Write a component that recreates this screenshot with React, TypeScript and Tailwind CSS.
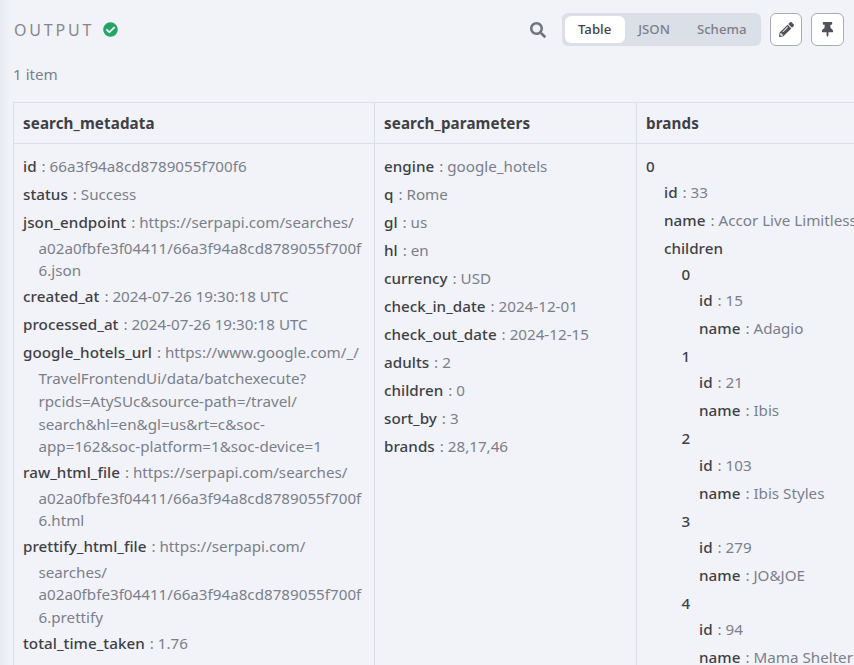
import { FaCheckCircle, FaPencilAlt, FaSearch, FaThumbtack } from "react-icons/fa";
import type { ReactNode } from "react";

type Row = { k: string; v?: ReactNode; lines?: string[] };

const META: Row[] = [
	{ k: "id", v: "66a3f94a8cd8789055f700f6" },
	{ k: "status", v: "Success" },
	{ k: "json_endpoint", v: "https://serpapi.com/searches/", lines: ["a02a0fbfe3f04411/66a3f94a8cd8789055f700f", "6.json"] },
	{ k: "created_at", v: "2024-07-26 19:30:18 UTC" },
	{ k: "processed_at", v: "2024-07-26 19:30:18 UTC" },
	{
		k: "google_hotels_url",
		v: "https://www.google.com/_/",
		lines: ["TravelFrontendUi/data/batchexecute?", "rpcids=AtySUc&source-path=/travel/", "search&hl=en&gl=us&rt=c&soc-", "app=162&soc-platform=1&soc-device=1"],
	},
	{ k: "raw_html_file", v: "https://serpapi.com/searches/", lines: ["a02a0fbfe3f04411/66a3f94a8cd8789055f700f", "6.html"] },
	{ k: "prettify_html_file", v: "https://serpapi.com/", lines: ["searches/", "a02a0fbfe3f04411/66a3f94a8cd8789055f700f", "6.prettify"] },
	{ k: "total_time_taken", v: "1.76" },
];

const PARAMS: Row[] = [
	{ k: "engine", v: "google_hotels" },
	{ k: "q", v: "Rome" },
	{ k: "gl", v: "us" },
	{ k: "hl", v: "en" },
	{ k: "currency", v: "USD" },
	{ k: "check_in_date", v: "2024-12-01" },
	{ k: "check_out_date", v: "2024-12-15" },
	{ k: "adults", v: "2" },
	{ k: "children", v: "0" },
	{ k: "sort_by", v: "3" },
	{ k: "brands", v: "28,17,46" },
];

const CHILDREN = [
	{ i: "0", id: "15", name: "Adagio" },
	{ i: "1", id: "21", name: "Ibis" },
	{ i: "2", id: "103", name: "Ibis Styles" },
	{ i: "3", id: "279", name: "JO&JOE" },
	{ i: "4", id: "94", name: "Mama Shelter" },
];

function Entry({ k, v, lines }: Row) {
	return (
		<div className="mb-[5.3px] whitespace-nowrap">
			<span className="font-medium tracking-[0.04px] text-[#3f3f46]">{k}</span>
			<span className="ml-px text-[#7b7f8a]"> : {v}</span>
			{lines && (
				<div className="-mb-[2.8px] mt-[3.2px] pl-[15.5px] text-[#7b7f8a]">
					{lines.map((l) => (
						<div key={l}>{l}</div>
					))}
				</div>
			)}
		</div>
	);
}

function Label({ children }: { children: ReactNode }) {
	return <div className="mb-[3.3px] font-medium text-[#3f3f46]">{children}</div>;
}

export default function App() {
	return (
		<div className="flex h-[665px] w-[854px] flex-col overflow-hidden bg-[#f1f3f9] bg-[linear-gradient(to_right,#e8eaf1,#f1f3f9_10px)] pl-[13px] font-['Noto_Sans',sans-serif] text-[15.2px] leading-[1.5]">
			<div className="flex h-[59px] shrink-0 items-center justify-between pr-[10px]">
				<div className="flex items-center gap-[9px]">
					<span className="pl-px text-[16px] tracking-[2.8px] text-[#85878f]">OUTPUT</span>
					<FaCheckCircle size={15} className="text-[#22a565]" />
				</div>
				<div className="flex items-center">
					<FaSearch size={16} className="mr-[16px] text-[#72757c]" />
					<div className="flex h-[33px] items-center rounded-md bg-[#dbdfe8] p-[3px] text-[13.2px] font-medium text-[#7c808b]">
						<span className="rounded-md bg-white px-[13.5px] py-[4px] text-[#3f3f46]">Table</span>
						<span className="px-[13.5px]">JSON</span>
						<span className="pl-[13.5px] pr-[11.5px]">Schema</span>
					</div>
					<button className="ml-[9px] flex h-[33px] w-[32px] items-center justify-center rounded-md border border-[#a9abb3] bg-white">
						<FaPencilAlt size={15} className="text-[#52525b]" />
					</button>
					<button className="ml-[9px] flex h-[33px] w-[33px] items-center justify-center rounded-md border border-[#a9abb3] bg-white">
						<FaThumbtack size={15} className="text-[#52525b]" />
					</button>
				</div>
			</div>
			<div className="mb-[17px] mt-[5px] leading-[21px] text-[#7b7f8a]">1 item</div>
			<div className="flex flex-1 border-l border-t border-[#dbdfe8]">
				<div className="w-[361px] shrink-0 border-r border-[#dbdfe8]">
					<div className="border-b border-[#dbdfe8] px-[9px] py-[9px] font-bold leading-[22px] tracking-[0.1px] text-[#3f3f46]">search_metadata</div>
					<div className="px-[9px] pt-[10.5px]">
						{META.map((r) => <Entry key={r.k} {...r} />)}
					</div>
				</div>
				<div className="w-[262px] shrink-0 border-r border-[#dbdfe8]">
					<div className="border-b border-[#dbdfe8] px-[9px] py-[9px] font-bold leading-[22px] tracking-[0.1px] text-[#3f3f46]">search_parameters</div>
					<div className="px-[9px] pt-[10.5px]">
						{PARAMS.map((r) => <Entry key={r.k} {...r} />)}
					</div>
				</div>
				<div className="w-[300px] shrink-0">
					<div className="border-b border-[#dbdfe8] px-[9px] py-[9px] font-bold leading-[22px] tracking-[0.1px] text-[#3f3f46]">brands</div>
					<div className="px-[9px] pt-[10.5px]">
						<Label>0</Label>
						<div className="pl-[18px]">
							<Entry k="id" v="33" />
							<Entry k="name" v="Accor Live Limitless" />
							<Label>children</Label>
							<div className="pl-[17.5px]">
								{CHILDREN.map((c) => (
									<div key={c.i}>
										<Label>{c.i}</Label>
										<div className="pl-[17.5px]">
											<Entry k="id" v={c.id} />
											<Entry k="name" v={c.name} />
										</div>
									</div>
								))}
							</div>
						</div>
					</div>
				</div>
			</div>
		</div>
	);
}
